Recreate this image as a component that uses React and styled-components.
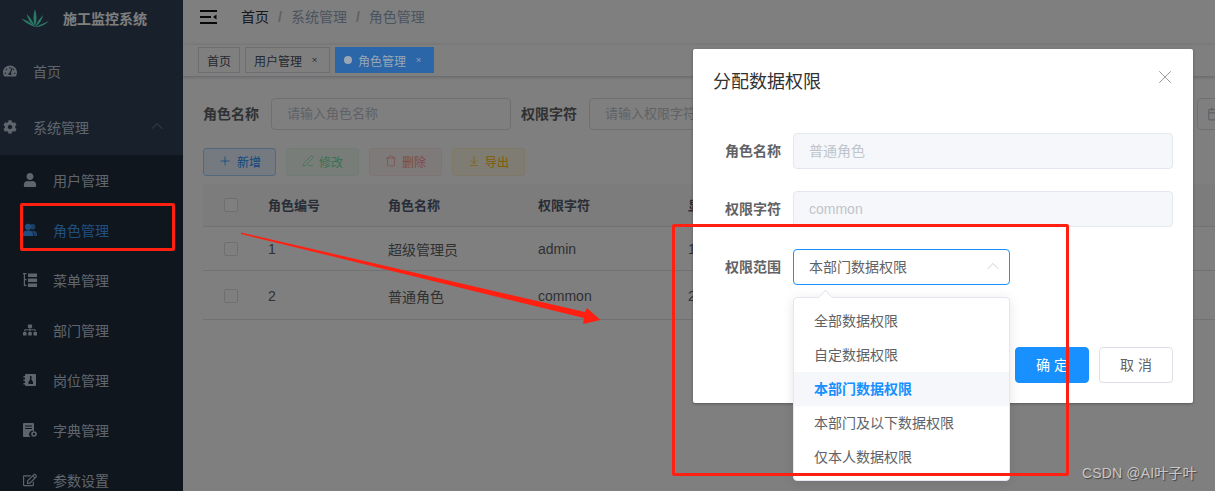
import React from "react";
import styled, { createGlobalStyle } from "styled-components";
import { FaTachometerAlt, FaCog, FaUser, FaSitemap, FaRegEdit } from "react-icons/fa";
import { Plus, PenLine, Trash, ArrowDownToLine, X, ChevronUp, Calendar } from "lucide-react";

const GlobalStyle = createGlobalStyle`
  html, body {
    margin: 0;
    padding: 0;
    background: #fff;
  }
  * {
    box-sizing: border-box;
  }
  body {
    font-family: "Liberation Sans", "Noto Sans CJK SC", sans-serif;
    font-size: 14px;
  }
`;

const Page = styled.div`
  position: relative;
  width: 1215px;
  height: 491px;
  overflow: hidden;
  display: flex;
  background: #fff;
`;

/* sidebar */
const Sidebar = styled.aside`
  width: 183px;
  flex: none;
  height: 100%;
  background: #304156;
  color: #bfcbd9;
`;
const LogoRow = styled.div`
  height: 43px;
  padding: 0 0 7px 20px;
  display: flex;
  align-items: center;
  gap: 13px;
  color: #fff;
  font-weight: 700;
  font-size: 14px;
`;
const MenuItem = styled.div`
  height: 56px;
  padding-left: 3px;
  display: flex;
  align-items: center;
  gap: 16px;
  position: relative;
  svg.menu-icon {
    width: 14px;
    height: 14px;
    flex: none;
  }
`;
const MenuArrow = styled.span`
  margin: 0 16px 2px auto;
  display: flex;
  color: #8a96a5;
`;
const SubMenu = styled.div`
  background: #1f2d3d;
  height: 400px;
`;
const SubItem = styled.div`
  height: 50px;
  padding-left: 23px;
  display: flex;
  align-items: center;
  gap: 16px;
  color: ${(props) => (props.$active ? "#409eff" : "#bfcbd9")};
  svg.menu-icon {
    width: 14px;
    height: 14px;
    flex: none;
  }
`;

/* main column */
const Main = styled.main`
  flex: 1;
  min-width: 0;
  overflow: hidden;
`;
const Navbar = styled.div`
  height: 44px;
  padding: 0 0 10px 17px;
  display: flex;
  align-items: center;
  gap: 24px;
`;
const Crumbs = styled.div`
  display: flex;
  align-items: baseline;
  gap: 9px;
  line-height: 20px;
  color: #97a8be;
  b {
    font-weight: 400;
    color: #303133;
  }
  i {
    font-style: normal;
    color: #c0c4cc;
    font-weight: 700;
  }
`;
const TagsBar = styled.div`
  height: 33px;
  padding: 2px 0 0 15px;
  display: flex;
  gap: 5px;
  border-top: 1px solid #f0f0f0;
  border-bottom: 1px solid #d8dce5;
  box-shadow: 0 1px 3px 0 rgba(0, 0, 0, 0.12), 0 0 3px 0 rgba(0, 0, 0, 0.04);
`;
const Tag = styled.div`
  height: 26px;
  padding: 0 8px;
  display: flex;
  align-items: center;
  font-size: 12px;
  border: 1px solid #d8dce5;
  background: #fff;
  color: #495060;
  small {
    font-size: 12px;
    margin-left: 6px;
    transform: scale(0.8);
    width: 13px;
    text-align: center;
  }
`;
/* the open tag keeps its strong blue through the dialog mask */
const ActiveTag = styled(Tag)`
  position: relative;
  z-index: 1;
  border-color: #2a66a8;
  background: #2a66a8;
  color: #9aa6b3;
`;
const TagDot = styled.span`
  width: 8px;
  height: 8px;
  border-radius: 50%;
  background: #9aa6b3;
  margin-right: 6px;
`;
const Content = styled.div`
  padding: 21px 0 0 20px;
  width: 1100px;
`;
const QueryForm = styled.div`
  display: flex;
  align-items: center;
  width: 1200px;
  margin-bottom: 18px;
`;
const QueryLabel = styled.label`
  font-weight: 700;
  color: #606266;
  padding: 0 12px 2px 0;
  white-space: nowrap;
`;
const TextInput = styled.input`
  flex: none;
  width: 240px;
  height: 32px;
  padding: 0 15px 2px;
  margin-right: 10px;
  font: inherit;
  font-size: 13px;
  border: 1px solid #dcdfe6;
  border-radius: 4px;
  outline: none;
  background: #fff;
  color: #606266;
  &::placeholder {
    color: #c0c4cc;
    opacity: 1;
  }
`;
const DateBox = styled.div`
  flex: none;
  width: 240px;
  height: 32px;
  border: 1px solid #dcdfe6;
  border-radius: 4px;
  padding-left: 9px;
  display: flex;
  align-items: center;
  color: #c0c4cc;
`;
const Toolbar = styled.div`
  display: flex;
  gap: 10px;
  margin-bottom: 8px;
`;
const palettes = {
  primary: ["#e8f4ff", "#a3d3ff", "#1890ff"],
  success: ["#e7faf0", "#d0f5e0", "#13ce66"],
  danger: ["#ffeded", "#ffdbdb", "#ff4949"],
  warning: ["#fff8e6", "#fff1cc", "#ffba00"],
};
const PlainButton = styled.button`
  width: 73px;
  height: 28px;
  padding: 0 0 2px;
  display: flex;
  align-items: center;
  justify-content: center;
  gap: 5px;
  font: inherit;
  font-size: 12px;
  border-radius: 3px;
  background: ${(props) => palettes[props.$kind][0]};
  border: 1px solid ${(props) => palettes[props.$kind][1]};
  color: ${(props) => palettes[props.$kind][2]};
  opacity: ${(props) => (props.disabled ? 0.6 : 1)};
`;
const Cell = styled.div`
  padding-left: 10px;
`;
const HeadCell = styled(Cell)`
  padding-bottom: 2px;
`;
const TableRow = styled.div`
  display: grid;
  grid-template-columns: 55px 120px 150px 150px 150px 150px 1fr;
  align-items: center;
  height: ${(props) => props.$height}px;
  padding-top: ${(props) => props.$offset || 0}px;
  border-bottom: 1px solid #dfe6ec;
  background: ${(props) => (props.$head ? "#f8f8f9" : "#fff")};
  color: ${(props) => (props.$head ? "#515a6e" : "#606266")};
  font-weight: ${(props) => (props.$head ? 700 : 400)};
  font-size: ${(props) => (props.$head ? 13 : 14)}px;
`;
const CheckBox = styled.span`
  display: block;
  width: 14px;
  height: 14px;
  margin-left: 21px;
  background: #fff;
  border: 1px solid #dcdfe6;
  border-radius: 2px;
`;

/* dialog layer */
const Overlay = styled.div`
  position: absolute;
  inset: 0;
  background: rgba(0, 0, 0, 0.5);
`;
const Dialog = styled.div`
  position: absolute;
  left: 693px;
  top: 49px;
  width: 500px;
  background: #fff;
  border-radius: 2px;
  box-shadow: 0 1px 3px rgba(0, 0, 0, 0.3);
`;
const DialogHead = styled.div`
  padding: 20px 20px 8px;
  display: flex;
  justify-content: space-between;
  font-size: 18px;
  line-height: 26px;
  color: #303133;
`;
const CloseBtn = styled.span`
  color: #909399;
  display: flex;
  margin: -3px -3px 0 0;
`;
const DialogBody = styled.div`
  padding: 30px 20px 52px;
  display: flex;
  flex-direction: column;
  gap: 22px;
`;
const FormRow = styled.div`
  display: flex;
  align-items: center;
  height: 36px;
`;
const FormLabel = styled.label`
  width: 80px;
  flex: none;
  padding: 0 12px 2px 0;
  text-align: right;
  font-weight: 700;
  color: #606266;
`;
const DisabledInput = styled.input`
  width: 380px;
  height: 36px;
  padding: 0 15px ${(props) => (props.$latin ? 0 : 2)}px;
  font: inherit;
  border: 1px solid #e4e7ed;
  border-radius: 4px;
  background: #f5f7fa;
  color: #c0c4cc;
  outline: none;
`;
const SelectBox = styled.div`
  width: 217px;
  height: 36px;
  padding: 0 6px 2px 15px;
  display: flex;
  align-items: center;
  justify-content: space-between;
  border: 1px solid #1890ff;
  border-radius: 4px;
  color: #606266;
  svg {
    color: #c0c4cc;
  }
`;
const DialogFoot = styled.div`
  padding: 10px 20px 20px;
  display: flex;
  justify-content: flex-end;
  gap: 10px;
`;
const FootButton = styled.button`
  width: 74px;
  height: 36px;
  padding: 0 0 2px 4px;
  font: inherit;
  letter-spacing: 4px;
  border-radius: 4px;
  border: 1px solid ${(props) => (props.$primary ? "#1890ff" : "#dcdfe6")};
  background: ${(props) => (props.$primary ? "#1890ff" : "#fff")};
  color: ${(props) => (props.$primary ? "#fff" : "#606266")};
`;
const Dropdown = styled.ul`
  position: absolute;
  left: 793px;
  top: 297px;
  width: 217px;
  margin: 0;
  padding: 6px 0;
  list-style: none;
  background: #fff;
  border: 1px solid #e4e7ed;
  border-radius: 4px;
  box-shadow: 0 2px 12px 0 rgba(0, 0, 0, 0.1);
  &::before {
    content: "";
    position: absolute;
    top: -6px;
    left: 26px;
    width: 10px;
    height: 10px;
    background: #fff;
    border-left: 1px solid #e4e7ed;
    border-top: 1px solid #e4e7ed;
    transform: rotate(45deg);
  }
`;
const Option = styled.li`
  height: 34px;
  line-height: 34px;
  padding-left: 20px;
  color: ${(props) => (props.$selected ? "#1890ff" : "#606266")};
  font-weight: ${(props) => (props.$selected ? 700 : 400)};
  background: ${(props) => (props.$selected ? "#f5f7fa" : "transparent")};
`;

/* things painted over the page */
const WatermarkLayer = styled.div`
  position: absolute;
  left: -15px;
  top: 15px;
  display: grid;
  grid-template-columns: repeat(4, 340px);
  grid-auto-rows: 62px;
  pointer-events: none;
  font-size: 19px;
  line-height: 20px;
  color: rgba(60, 60, 60, 0.022);
`;
const RedBox = styled.div`
  position: absolute;
  left: ${(props) => props.$x}px;
  top: ${(props) => props.$y}px;
  width: ${(props) => props.$w}px;
  height: ${(props) => props.$h}px;
  border: 3px solid #ff2012;
  border-radius: 2px;
`;
const ArrowSvg = styled.svg`
  position: absolute;
  left: 0;
  top: 0;
`;
const CsdnMark = styled.div`
  position: absolute;
  left: 1082px;
  top: 464px;
  font-size: 14px;
  line-height: 18px;
  letter-spacing: 0.15px;
  color: #c8c8c8;
  text-shadow: 1px 1px 1px rgba(40, 40, 40, 0.7);
`;

const Logo = () => (
  <svg width="30" height="19" viewBox="0 0 30 19" fill="#54f4d0">
    <path d="M15 18 Q6 15 1.500 9.600 Q9 12 15 18Z" />
    <path d="M15 18 Q8 12 6.600 5 Q12 10 15 18Z" />
    <path d="M15 18 Q12 8 15 0.300 Q18 8 15 18Z" />
    <path d="M15 18 Q18 11 23 6 Q22 13 15 18Z" />
    <path d="M15 18 Q22 15 29 12 Q23 18 15 18Z" />
  </svg>
);
const UsersIcon = () => (
  <svg className="menu-icon" viewBox="0 0 14 14" fill="currentColor">
    <circle cx="9.500" cy="3.800" r="2.800" opacity="0.75" />
    <path d="M8.500 8h2.500c1.700 0 3 1.300 3 3v2h-3.200v-1.500c0-1.400-.9-2.700-2.300-3.500Z" opacity="0.75" />
    <circle cx="5" cy="3.800" r="3.100" />
    <path d="M0 13v-2c0-1.900 1.500-3.400 3.400-3.400h3.200c1.900 0 3.400 1.500 3.400 3.400v2Z" />
  </svg>
);
const TreeIcon = () => (
  <svg className="menu-icon" viewBox="0 0 14 14" fill="currentColor">
    <path d="M0 0h3.500v1.200H2V6h1.500v1.200H2v4.600h1.500V13H.8V1.200H0Z" />
    <rect x="5" y="0.500" width="9" height="3.500" />
    <rect x="5" y="5.500" width="9" height="3.500" />
    <rect x="5" y="10.500" width="9" height="3.500" />
  </svg>
);
const PostIcon = () => (
  <svg className="menu-icon" viewBox="0 0 14 14" fill="currentColor">
    <path d="M3 1h9a1 1 0 0 1 1 1v10a1 1 0 0 1-1 1H3a1 1 0 0 1-1-1V2a1 1 0 0 1 1-1Z" />
    <rect x="0.500" y="3" width="2" height="1.500" />
    <rect x="0.500" y="6.500" width="2" height="1.500" />
    <rect x="0.500" y="10" width="2" height="1.500" />
    <path d="M7 3h1.500v3.500l1.500 2.500v2H5.500V9L7 6.500Z" fill="#1f2d3d" />
  </svg>
);
const DictIcon = () => (
  <svg className="menu-icon" viewBox="0 0 14 14" fill="currentColor">
    <path d="M0 1a1 1 0 0 1 1-1h9a1 1 0 0 1 1 1v7a3.500 3.500 0 0 0-3.500 6H1a1 1 0 0 1-1-1Z" />
    <rect x="2" y="2.500" width="7" height="1" fill="#1f2d3d" />
    <rect x="2" y="5" width="7" height="1" fill="#1f2d3d" />
    <circle cx="11" cy="11" r="2" fill="none" stroke="currentColor" strokeWidth="1.600" />
  </svg>
);
const Hamburger = () => (
  <svg width="17" height="14" viewBox="0 0 17 14" fill="#111">
    <rect x="0" y="0" width="17" height="2" />
    <rect x="0" y="6" width="11" height="2" />
    <rect x="0" y="12" width="17" height="2" />
    <path d="M13 7l3.500-2.500v5Z" />
  </svg>
);

const subMenus = [
  { label: "用户管理", icon: <FaUser className="menu-icon" /> },
  { label: "角色管理", icon: <UsersIcon />, active: true },
  { label: "菜单管理", icon: <TreeIcon /> },
  { label: "部门管理", icon: <FaSitemap className="menu-icon" /> },
  { label: "岗位管理", icon: <PostIcon /> },
  { label: "字典管理", icon: <DictIcon /> },
  { label: "参数设置", icon: <FaRegEdit className="menu-icon" /> },
];
const rows = [
  { id: "1", name: "超级管理员", key: "admin", sort: "1", height: 44, offset: 0 },
  { id: "2", name: "普通角色", key: "common", sort: "2", height: 49, offset: 2 },
];
const options = ["全部数据权限", "自定数据权限", "本部门数据权限", "本部门及以下数据权限", "仅本人数据权限"];
const marks = Array.from({ length: 32 }, (_, i) => i);

function App() {
  return (
    <Page>
      <GlobalStyle />
      <Sidebar>
        <LogoRow>
          <Logo />
          施工监控系统
        </LogoRow>
        <MenuItem>
          <FaTachometerAlt className="menu-icon" />
          首页
        </MenuItem>
        <MenuItem>
          <FaCog className="menu-icon" />
          系统管理
          <MenuArrow>
            <ChevronUp size={20} strokeWidth={1} />
          </MenuArrow>
        </MenuItem>
        <SubMenu>
          {subMenus.map((item) => (
            <SubItem key={item.label} $active={item.active}>
              {item.icon}
              {item.label}
            </SubItem>
          ))}
        </SubMenu>
      </Sidebar>

      <Main>
        <Navbar>
          <Hamburger />
          <Crumbs>
            <b>首页</b>
            <i>/</i>
            <span>系统管理</span>
            <i>/</i>
            <span>角色管理</span>
          </Crumbs>
        </Navbar>
        <TagsBar>
          <Tag>首页</Tag>
          <Tag>
            用户管理<small>×</small>
          </Tag>
          <ActiveTag>
            <TagDot />
            角色管理<small>×</small>
          </ActiveTag>
        </TagsBar>
        <Content>
          <QueryForm>
            <QueryLabel>角色名称</QueryLabel>
            <TextInput placeholder="请输入角色名称" />
            <QueryLabel>权限字符</QueryLabel>
            <TextInput placeholder="请输入权限字符" />
            <QueryLabel>状态</QueryLabel>
            <TextInput placeholder="角色状态" />
            <QueryLabel>创建时间</QueryLabel>
            <DateBox>
              <Calendar size={14} />
            </DateBox>
          </QueryForm>
          <Toolbar>
            <PlainButton $kind="primary">
              <Plus size={14} strokeWidth={1.3} />
              新增
            </PlainButton>
            <PlainButton $kind="success" disabled>
              <PenLine size={12} strokeWidth={1.3} />
              修改
            </PlainButton>
            <PlainButton $kind="danger" disabled>
              <Trash size={12} strokeWidth={1.3} />
              删除
            </PlainButton>
            <PlainButton $kind="warning">
              <ArrowDownToLine size={12} strokeWidth={1.3} />
              导出
            </PlainButton>
          </Toolbar>
          <TableRow $head $height={43}>
            <CheckBox />
            <HeadCell>角色编号</HeadCell>
            <HeadCell>角色名称</HeadCell>
            <HeadCell>权限字符</HeadCell>
            <HeadCell>显示顺序</HeadCell>
            <HeadCell>状态</HeadCell>
            <HeadCell>创建时间</HeadCell>
          </TableRow>
          {rows.map((row) => (
            <TableRow key={row.id} $height={row.height} $offset={row.offset}>
              <CheckBox />
              <Cell>{row.id}</Cell>
              <Cell>{row.name}</Cell>
              <Cell>{row.key}</Cell>
              <Cell>{row.sort}</Cell>
              <Cell />
              <Cell />
            </TableRow>
          ))}
        </Content>
      </Main>

      <Overlay />

      <Dialog>
        <DialogHead>
          分配数据权限
          <CloseBtn>
            <X size={22} strokeWidth={1} />
          </CloseBtn>
        </DialogHead>
        <DialogBody>
          <FormRow>
            <FormLabel>角色名称</FormLabel>
            <DisabledInput disabled value="普通角色" />
          </FormRow>
          <FormRow>
            <FormLabel>权限字符</FormLabel>
            <DisabledInput disabled $latin value="common" />
          </FormRow>
          <FormRow>
            <FormLabel>权限范围</FormLabel>
            <SelectBox>
              本部门数据权限
              <ChevronUp size={20} strokeWidth={1} />
            </SelectBox>
          </FormRow>
        </DialogBody>
        <DialogFoot>
          <FootButton $primary>确定</FootButton>
          <FootButton>取消</FootButton>
        </DialogFoot>
      </Dialog>

      <Dropdown>
        {options.map((option) => (
          <Option key={option} $selected={option === "本部门数据权限"}>
            {option}
          </Option>
        ))}
      </Dropdown>

      <WatermarkLayer>
        {marks.map((i) => (
          <div key={i}>
            y25958
            <br />
            H3C
          </div>
        ))}
      </WatermarkLayer>

      <RedBox $x={20} $y={203} $w={155} $h={48} />
      <RedBox $x={672} $y={224} $w={397} $h={252} />
      <ArrowSvg width="1215" height="491">
        <polygon points="241,232.500 585,312 587,308 600.500,320 583,324 584,318 241,234" fill="#ff2012" />
      </ArrowSvg>
      <CsdnMark>CSDN @AI叶子叶</CsdnMark>
    </Page>
  );
}

export default App;
